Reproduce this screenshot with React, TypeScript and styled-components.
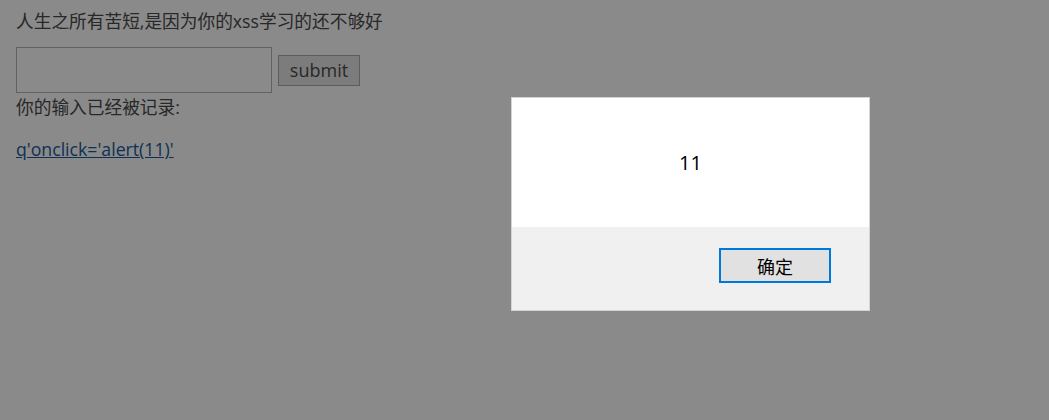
import styled, { createGlobalStyle } from "styled-components";

const GlobalStyle = createGlobalStyle`
  html, body {
    margin: 0;
    padding: 0;
    background: #ffffff;
  }
  body {
    font-family: "Open Sans", "Noto Sans CJK SC", sans-serif;
  }
`;

const Page = styled.div`
  position: relative;
  width: 1049px;
  height: 420px;
  overflow: hidden;
  padding: 9px 16px;
  box-sizing: border-box;
  color: #4a4a4a;
  font-size: 17.7px;
`;

const Title = styled.div`
  line-height: 24px;
  margin-bottom: 14px;
`;

const FormRow = styled.form`
  display: flex;
  align-items: center;
  gap: 6px;
`;

const TextInput = styled.input`
  width: 256px;
  height: 46px;
  box-sizing: border-box;
  border: 1px solid #b5b5b5;
  background: #fff;
  margin: 0;
`;

const SubmitButton = styled.button`
  height: 31px;
  width: 82px;
  box-sizing: border-box;
  border: 1px solid #aaaaaa;
  background: #e6e6e6;
  color: #4a4a4a;
  font-family: "Open Sans", sans-serif;
  font-size: 18px;
  padding: 0;
  line-height: 1;
`;

const Recorded = styled.div`
  line-height: 24px;
  margin-top: 2px;
`;

const Link = styled.a`
  display: inline-block;
  margin-top: 18px;
  line-height: 24px;
  color: #1a5b9a;
  text-decoration: underline;
`;

const Overlay = styled.div`
  position: absolute;
  inset: 0;
  background: rgba(0, 0, 0, 0.46);
`;

const Dialog = styled.div`
  position: absolute;
  left: 511px;
  top: 97px;
  width: 359px;
  height: 214px;
  box-sizing: border-box;
  border: 1px solid #d4d4d4;
  display: flex;
  flex-direction: column;
  font-family: "Open Sans", "Noto Sans CJK SC", sans-serif;
`;

const Message = styled.div`
  height: 129px;
  background: #ffffff;
  display: flex;
  align-items: center;
  justify-content: center;
  font-size: 20px;
  color: #000;
`;

const Footer = styled.div`
  flex: 1;
  background: #f0f0f0;
  display: flex;
  justify-content: flex-end;
  align-items: flex-start;
  padding: 21px 38px 0 0;
`;

const OkButton = styled.button`
  width: 112px;
  height: 35px;
  box-sizing: border-box;
  border: 2px solid #0078d7;
  background: #e1e1e1;
  color: #000;
  font-family: "Noto Sans CJK SC", sans-serif;
  font-size: 18px;
  line-height: 1;
  padding: 0;
`;

export default function App() {
  return (
    <>
      <GlobalStyle />
      <Page>
        <Title>人生之所有苦短,是因为你的xss学习的还不够好</Title>
        <FormRow onSubmit={(e) => e.preventDefault()}>
          <TextInput type="text" name="text" />
          <SubmitButton type="submit">submit</SubmitButton>
        </FormRow>
        <Recorded>你的输入已经被记录:</Recorded>
        <Link href="#">q'onclick='alert(11)'</Link>
        <Overlay />
        <Dialog>
          <Message>11</Message>
          <Footer>
            <OkButton>确定</OkButton>
          </Footer>
        </Dialog>
      </Page>
    </>
  );
}
